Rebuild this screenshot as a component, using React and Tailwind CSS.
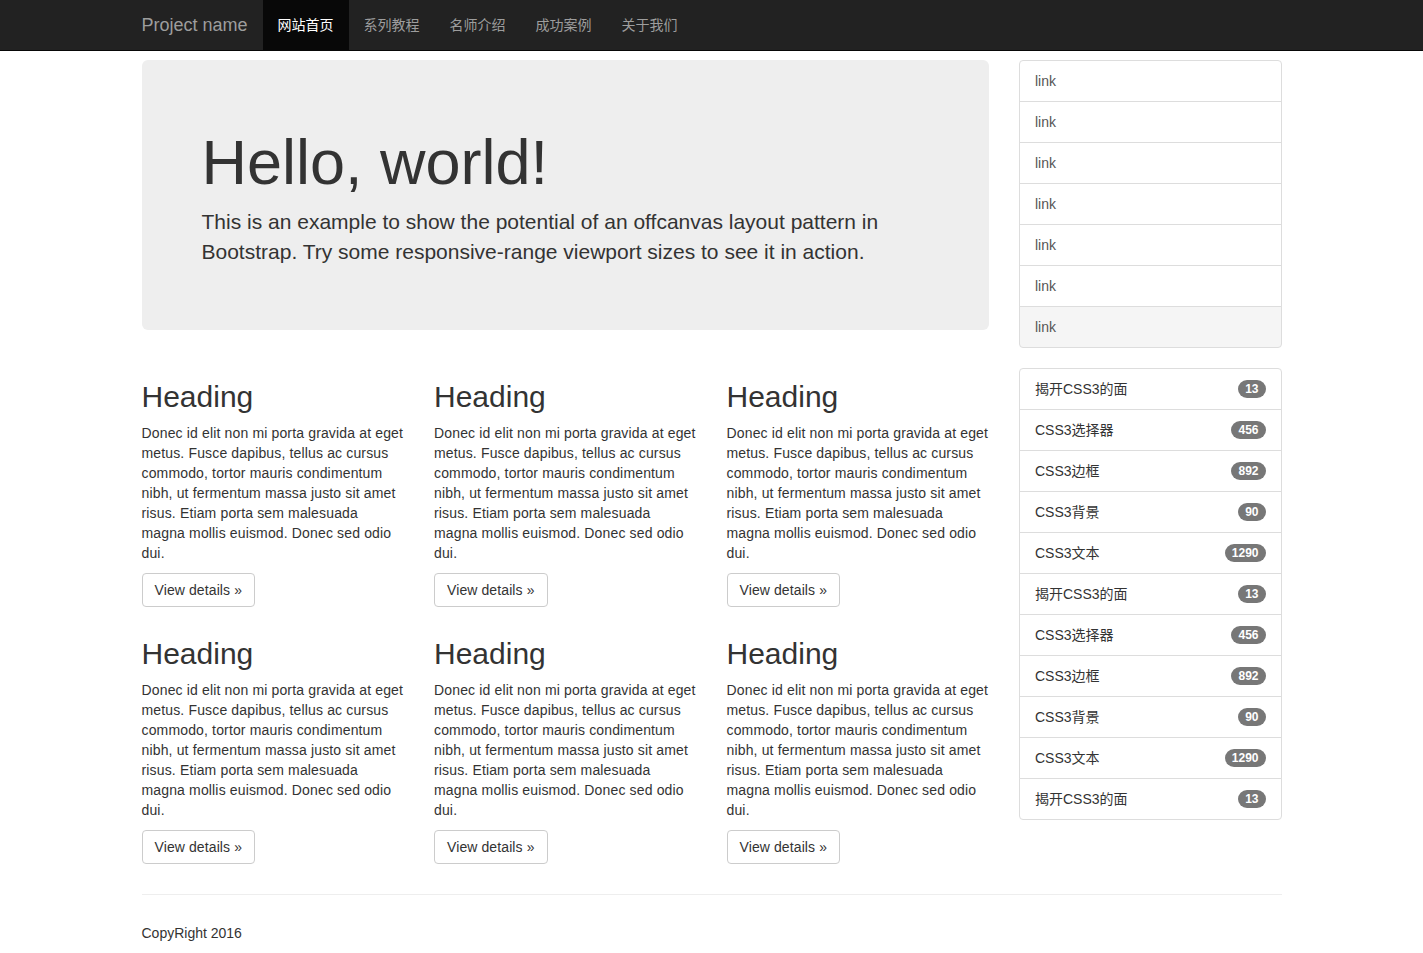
const FONT = { fontFamily: '"Liberation Sans", Arial, "Noto Sans CJK SC", sans-serif' };

const navItems = ['网站首页', '系列教程', '名师介绍', '成功案例', '关于我们'];

const body =
  'Donec id elit non mi porta gravida at eget metus. Fusce dapibus, tellus ac cursus commodo, tortor mauris condimentum nibh, ut fermentum massa justo sit amet risus. Etiam porta sem malesuada magna mollis euismod. Donec sed odio dui.';

const badges = [
  ['揭开CSS3的面', 13],
  ['CSS3选择器', 456],
  ['CSS3边框', 892],
  ['CSS3背景', 90],
  ['CSS3文本', 1290],
  ['揭开CSS3的面', 13],
  ['CSS3选择器', 456],
  ['CSS3边框', 892],
  ['CSS3背景', 90],
  ['CSS3文本', 1290],
  ['揭开CSS3的面', 13],
];

const Card = () => (
  <div className="w-[292.5px] px-[15px]">
    <h2 className="mt-5 mb-[10px] text-[30px] leading-[33px] font-medium text-[#333]">Heading</h2>
    <p className="mb-[10px] text-[14px] leading-5 tracking-[0.15px]">{body}</p>
    <p className="mb-[10px]">
      <a
        href="#"
        className="inline-block px-3 py-[6px] text-[14px] leading-5 tracking-[0.1px] text-[#333] bg-white border border-[#ccc] rounded"
      >
        View details »
      </a>
    </p>
  </div>
);

export default function App() {
  return (
    <div className="min-h-[953px] bg-white text-[#333] text-[14px] leading-5" style={FONT}>
      <nav className="h-[51px] bg-[#222] border-b border-[#080808]">
        <div className="w-[1170px] mx-auto px-[15px] flex h-[50px]">
          <a href="#" className="-ml-[15px] px-[15px] py-[15px] text-[18px] leading-5 text-[#9d9d9d]">
            Project name
          </a>
          <ul className="flex">
            {navItems.map((t, i) => (
              <li key={t}>
                <a
                  href="#"
                  className={`block px-[15px] py-[15px] leading-5 ${
                    i === 0 ? 'bg-[#080808] text-white' : 'text-[#9d9d9d]'
                  }`}
                >
                  {t}
                </a>
              </li>
            ))}
          </ul>
        </div>
      </nav>

      <div className="w-[1170px] mx-auto px-[15px] pt-[9px]">
        <div className="flex -mx-[15px]">
          <div className="w-[877.5px] px-[15px]">
            <div className="bg-[#eee] rounded-md px-[60px] py-[48px] mb-[30px]">
              <h1 className="mt-5 mb-[10px] text-[63px] leading-[1.1] font-medium text-[#333]">Hello, world!</h1>
              <p className="mb-[15px] text-[21px] leading-[30px] font-extralight">
                This is an example to show the potential of an offcanvas layout pattern in Bootstrap. Try some
                responsive-range viewport sizes to see it in action.
              </p>
            </div>
            <div className="flex flex-wrap -mx-[15px]">
              {[0, 1, 2, 3, 4, 5].map((i) => (
                <Card key={i} />
              ))}
            </div>
          </div>

          <div className="w-[292.5px] px-[15px]">
            <div className="mb-5 flex flex-col">
              {[0, 1, 2, 3, 4, 5, 6].map((i) => (
                <a
                  key={i}
                  href="#"
                  className={`block px-[15px] py-[10px] border border-[#ddd] -mb-px text-[#555] leading-5 ${
                    i === 0 ? 'rounded-t' : ''
                  } ${i === 6 ? 'rounded-b bg-[#f5f5f5]' : 'bg-white'}`}
                >
                  link
                </a>
              ))}
            </div>
            <ul className="mb-5 mt-[21px]">
              {badges.map(([t, n], i) => (
                <li
                  key={i}
                  className={`flex items-center justify-between px-[15px] py-[10px] border border-[#ddd] -mb-px bg-white leading-5 ${
                    i === 0 ? 'rounded-t' : ''
                  } ${i === badges.length - 1 ? 'rounded-b' : ''}`}
                >
                  <span>{t}</span>
                  <span className="bg-[#777] text-white text-[12px] font-bold leading-none px-[7px] py-[3px] rounded-[10px]">
                    {n}
                  </span>
                </li>
              ))}
            </ul>
          </div>
        </div>

        <hr className="mt-5 mb-5 border-0 border-t border-[#eee]" />
        <footer className="pt-2">
          <p className="mb-[10px]">CopyRight 2016</p>
        </footer>
      </div>
    </div>
  );
}
